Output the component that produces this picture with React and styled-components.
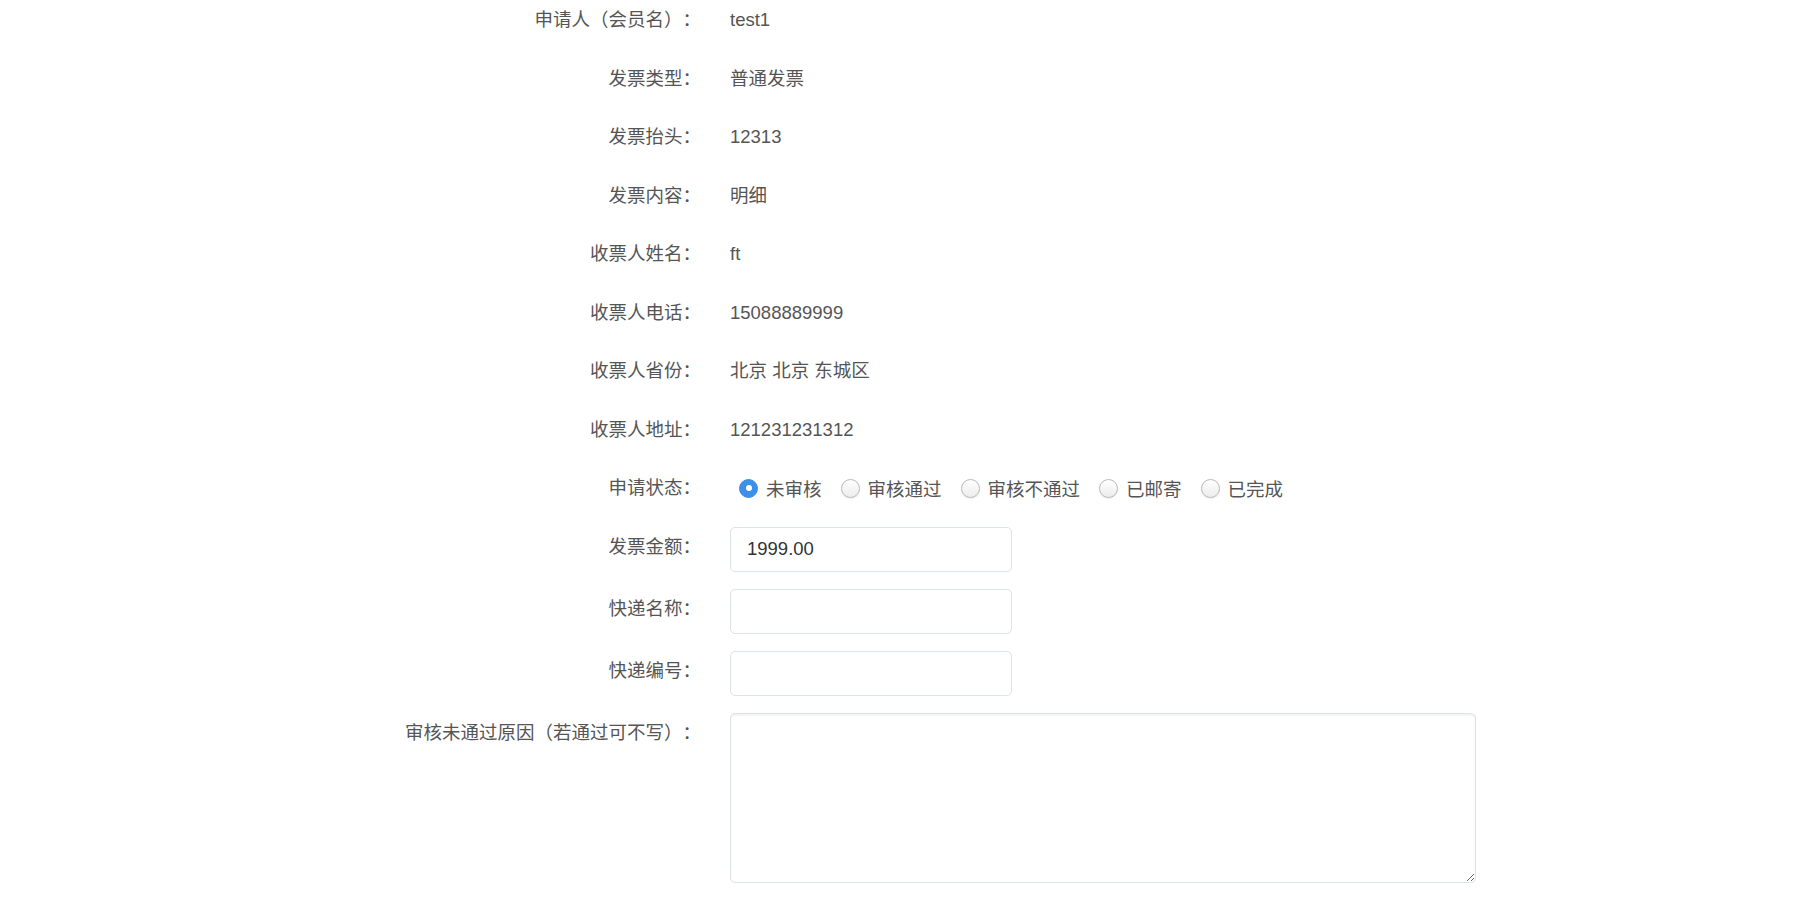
import React from "react";
import styled, { createGlobalStyle } from "styled-components";

const GlobalStyle = createGlobalStyle`
  html, body {
    margin: 0;
    padding: 0;
    background: #fff;
  }
  body {
    font-family: "Liberation Sans", "Noto Sans CJK SC", sans-serif;
    font-size: 18.5px;
    color: #555;
    text-spacing-trim: space-all;
  }
`;

const Form = styled.form`
  display: flex;
  flex-direction: column;
  width: 1800px;
  height: 900px;
  overflow: hidden;
`;

const Row = styled.div`
  display: grid;
  grid-template-columns: 730px 1fr;
  align-items: start;
  margin-bottom: ${(p) => (p.$field ? "17px" : "18px")};
`;

const Label = styled.label`
  display: block;
  text-align: right;
  padding-right: 29px;
  line-height: 40.5px;
  height: 40.5px;
  white-space: nowrap;
  color: #555;
  text-spacing-trim: space-all;
`;

const Value = styled.div`
  line-height: 40.5px;
  height: 40.5px;
  color: #555;
`;

const RadioGroup = styled.div`
  display: flex;
  align-items: center;
  height: 40.5px;
  padding-left: 9px;
`;

const RadioOption = styled.label`
  display: flex;
  align-items: center;
  margin-right: 19px;
  cursor: pointer;
  color: #555;
`;

const RadioInput = styled.input`
  appearance: none;
  -webkit-appearance: none;
  width: 19px;
  height: 19px;
  margin: 0 8px 0 0;
  border-radius: 50%;
  box-sizing: border-box;
  border: 1px solid #b9b9b9;
  background: linear-gradient(#ffffff, #ececec);
  box-shadow: 0 1px 1px rgba(0, 0, 0, 0.08);
  position: relative;

  &:checked {
    border-color: #3a8ee6;
    background: #3d90ea;
    box-shadow: none;
  }

  &:checked::after {
    content: "";
    position: absolute;
    left: 50%;
    top: 50%;
    width: 6px;
    height: 6px;
    margin: -3px 0 0 -3px;
    border-radius: 50%;
    background: #fff;
  }
`;

const TextInput = styled.input`
  box-sizing: border-box;
  width: 282px;
  height: 45px;
  padding: 0 16px;
  border: 1px solid #dde3e6;
  border-radius: 5px;
  font-family: inherit;
  font-size: 18.5px;
  color: #333;
  outline: none;
  background: #fff;
`;

const TextArea = styled.textarea`
  display: block;
  box-sizing: border-box;
  width: 746px;
  height: 170px;
  padding: 8px 16px;
  border: 1px solid #dde3e6;
  border-radius: 5px;
  box-shadow: inset 0 2px 2px rgba(0, 0, 0, 0.05);
  font-family: inherit;
  font-size: 18.5px;
  color: #333;
  outline: none;
`;

const details = [
  ["申请人（会员名）：", "test1"],
  ["发票类型：", "普通发票"],
  ["发票抬头：", "12313"],
  ["发票内容：", "明细"],
  ["收票人姓名：", "ft"],
  ["收票人电话：", "15088889999"],
  ["收票人省份：", "北京 北京 东城区"],
  ["收票人地址：", "121231231312"],
];

const statuses = ["未审核", "审核通过", "审核不通过", "已邮寄", "已完成"];

export default function App() {
  return (
    <>
      <GlobalStyle />
      <Form onSubmit={(e) => e.preventDefault()}>
        {details.map(([label, value]) => (
          <Row key={label}>
            <Label>{label}</Label>
            <Value>{value}</Value>
          </Row>
        ))}
        <Row>
          <Label>申请状态：</Label>
          <RadioGroup>
            {statuses.map((s, i) => (
              <RadioOption key={s}>
                <RadioInput type="radio" name="status" defaultChecked={i === 0} />
                {s}
              </RadioOption>
            ))}
          </RadioGroup>
        </Row>
        <Row $field>
          <Label>发票金额：</Label>
          <TextInput defaultValue="1999.00" />
        </Row>
        <Row $field>
          <Label>快递名称：</Label>
          <TextInput />
        </Row>
        <Row $field>
          <Label>快递编号：</Label>
          <TextInput />
        </Row>
        <Row $field>
          <Label>审核未通过原因（若通过可不写）：</Label>
          <TextArea />
        </Row>
      </Form>
    </>
  );
}
